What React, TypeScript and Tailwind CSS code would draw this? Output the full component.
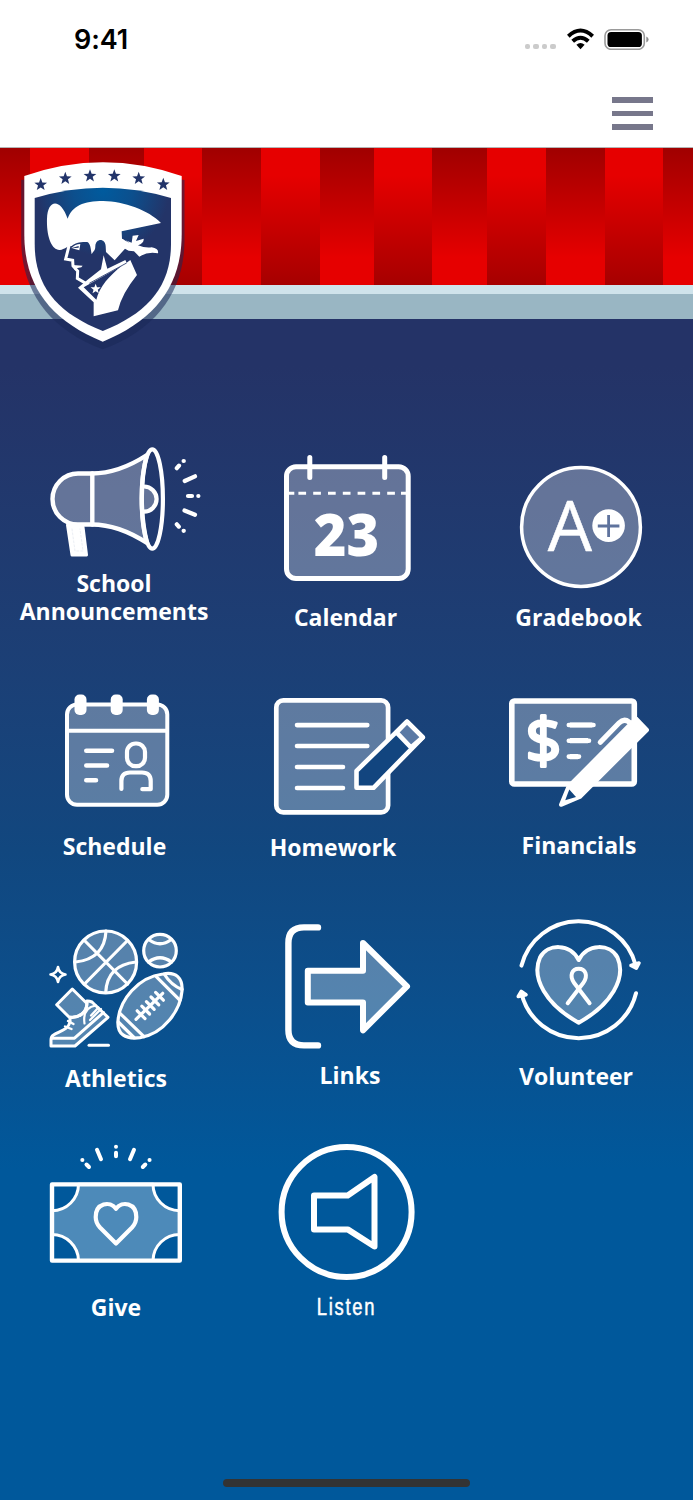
import type { ReactNode } from 'react';
import clsx from 'clsx';

const STRIPES = [
  'w-[30px]',
  'w-[59px]',
  'w-[55px]',
  'w-[58px]',
  'w-[59px]',
  'w-[59px]',
  'w-[54px]',
  'w-[58px]',
  'w-[55px]',
  'w-[59px]',
  'w-[59px]',
  'w-[58px]',
  'w-[30px]',
];

const LOGO_STARS = [
  [40.7, 184.7],
  [65.3, 178.5],
  [90, 176],
  [114.3, 176],
  [138.7, 178.5],
  [163.3, 184.5],
];

function starPoints(cx: number, cy: number, r: number) {
  return Array.from({ length: 10 }, (_, i) => {
    const a = (Math.PI / 5) * i - Math.PI / 2;
    const d = i % 2 ? r * 0.42 : r;
    return `${cx + d * Math.cos(a)},${cy + d * Math.sin(a)}`;
  }).join(' ');
}

function StatusBar() {
  return (
    <div className="flex h-20 items-start justify-between pl-[74px] pr-11">
      <span className="mt-[23px] font-['Inter',sans-serif] text-[27px] leading-[34px] font-semibold tracking-[-0.1px] text-black">
        9:41
      </span>
      <div className="mt-7 flex h-[22px] items-center">
        <div className="mr-[11px] mt-[15px] flex gap-[3px]">
          {[0, 1, 2, 3].map((i) => (
            <span key={i} className="size-[5.6px] rounded-[2px] bg-[#cbcbcb]" />
          ))}
        </div>
        <svg className="mr-2.5 h-[22px] w-[27px]" viewBox="567 28 27 22" fill="none" stroke="#000" strokeWidth="4">
          <path d="M568.3 36.2Q580.5 24.8 592.7 36.2" />
          <path d="M572.7 41.3Q580.5 34.2 588.3 41.3" />
          <path d="M576.4 44.8Q580.5 41.2 584.6 44.8L580.5 49.2Z" fill="#000" stroke="none" />
        </svg>
        <svg className="h-[22px] w-[45px]" viewBox="604 28 45 22">
          <rect x="605" y="29.7" width="39.3" height="19.6" rx="6" fill="none" stroke="#9a9a9a" strokeWidth="1.6" />
          <rect x="607.5" y="32" width="34.4" height="15" rx="3.6" />
          <path d="M646.3 36.5Q648.6 37.5 648.6 39.4Q648.6 41.4 646.3 42.4Z" fill="#8d8d8d" />
        </svg>
      </div>
    </div>
  );
}

function Logo() {
  return (
    <svg className="absolute top-2 left-4 h-[200px] w-[174px]" viewBox="16 156 174 200">
      <defs>
        <radialGradient id="shield" gradientUnits="userSpaceOnUse" cx="103" cy="190" r="66">
          <stop offset="0" stopColor="#005b9e" />
          <stop offset=".45" stopColor="#0c4f8d" />
          <stop offset="1" stopColor="#233468" />
        </radialGradient>
      </defs>
      <path
        d="M21.2 180L103 168L184.5 180V240C184.5 290 158 329 102.7 349.3C48 329 21.2 290 21.2 240Z"
        fill="#1a2858"
        opacity=".55"
      />
      <path d="M24.3 176Q103 148.5 181.7 176V234C181.7 286 155 320 102.7 341.7C50 320 24.3 286 24.3 234Z" fill="#fff" />
      <path d="M34.7 198Q102.8 177.3 171 198V244C171 286 148 313 102.8 331C57 313 34.7 286 34.7 244Z" fill="url(#shield)" />
      {LOGO_STARS.map(([x, y]) => (
        <polygon key={x} points={starPoints(x, y, 6.7)} fill="#22346a" />
      ))}
      {/* Patriot head */}
      <g transform="translate(0 140) scale(.3333)">
        <path
          d="M203 236C182 174 143 176 141 236C139 292 156 332 180 330C194 328 202 318 215 318C228 306 245 306 262 306C272 312 272 326 275 343C280 332 286 334 286 318C288 294 315 294 317 318L318 336L344 361L375 326L386 332L402 334L418 350Q445 333 474 340Q477 325 455 322Q436 325 414 316Q433 308 431 296L408 303L416 285L398 287L395 308L366 296L365 274L483 249C445 210 372 184 310 183C250 183 217 198 203 236Z"
          fill="#fff"
        />
        <path d="M366 291L389 309L374 301Z" fill="#1f3a72" />
        <path
          d="M207 318L197 357L218 361L219 378L233 393L232 415L262 433"
          fill="none"
          stroke="#fff"
          strokeWidth="9"
        />
        <path d="M218 375L248 377L244 382L229 385L236 394L224 390Z" fill="#fff" />
        <path d="M213 325Q226 312 241 312L238 331L216 325L236 323L236 318Z" fill="#fff" />
        <path d="M311 346L303 388L262 420L234 443L281 487L281 529L354 511Q365 462 411 405L391 360L380 368L376 360L322 386Z" fill="#fff" />
        <path d="M251 442L366 377C330 405 298 440 289 479Z" fill="#22346a" />
        <path d="M268 430L380 369" stroke="#22346a" strokeWidth="2.5" />
        <polygon points={starPoints(287, 447, 16)} fill="#fff" />
      </g>
    </svg>
  );
}

function Banner() {
  return (
    <div className="relative">
      <div className="flex h-[137px]">
        {STRIPES.map((width, i) => (
          <div
            key={i}
            className={clsx(
              width,
              'bg-linear-to-b',
              i % 2 ? 'from-[#e60000] from-20% to-[#a60000]' : 'from-[#a00000] to-[#e60000] to-80%',
            )}
          />
        ))}
      </div>
      <div className="h-[9px] bg-[#cfe3eb]" />
      <div className="h-[25px] bg-[#99b6c3]" />
      <Logo />
    </div>
  );
}

interface TileProps {
  label: ReactNode;
  // viewBox of the drawing; its width is always one column
  box: string;
  size: string;
  labelClass?: string;
  children: ReactNode;
}

const boldLabel = "font-['Open_Sans',sans-serif] text-[23px] font-bold";

function Tile({ label, box, size, labelClass, children }: TileProps) {
  return (
    <button className="flex flex-col items-stretch text-white">
      <svg
        className={clsx('w-[231px]', size)}
        viewBox={box}
        fill="none"
        stroke="#fff"
        strokeLinecap="round"
        strokeLinejoin="round"
      >
        {children}
      </svg>
      <span className={clsx('block text-center leading-7', labelClass)}>{label}</span>
    </button>
  );
}

const tint = 'rgba(255,255,255,.3)';

export default function App() {
  return (
    <div className="flex h-[1500px] w-[693px] flex-col overflow-hidden bg-white">
      <header className="h-[148px] shrink-0 border-b border-[#b5b5b5]">
        <StatusBar />
        <button className="mt-[17px] ml-[612px] flex w-[40.5px] flex-col gap-2">
          <span className="h-[5.6px] bg-[#77778b]" />
          <span className="h-[5.6px] bg-[#77778b]" />
          <span className="h-[5.6px] bg-[#77778b]" />
        </button>
      </header>

      <div className="relative z-10">
        <Banner />
      </div>

      <main className="flex flex-1 flex-col bg-linear-to-b from-[#243367] from-4% via-[#11477f] via-45% to-[#00589b] to-72% pt-[111px]">
        <div className="grid grid-cols-3 grid-rows-[250px_225px_225px_225px]">
          <Tile
            label={
              <>
                <span className="block">School</span>
                <span className="block">Announcements</span>
              </>
            }
            box="0 430 231 140"
            size="h-[140px]"
            labelClass={clsx(boldLabel, 'pr-[3px] !leading-[27.5px]')}
          >
            <path
              d="M92 473.5H78A25.5 25.5 0 0 0 78 524.5H92C112 524.5 130 532 147 543C140 515 140 480 147 455C130 466 112 473.5 92 473.5Z"
              fill={tint}
              strokeWidth="4.4"
            />
            <path d="M92.3 473.5V524.5" strokeWidth="4.4" />
            <ellipse cx="152.3" cy="499" rx="10.6" ry="49.7" strokeWidth="4.2" />
            <path d="M144 486.5A12.6 12.6 0 0 1 144 511.7" fill={tint} strokeWidth="4.2" />
            <path d="M67.5 525L83 527L86.5 555L72 555Z" fill="#fff" strokeWidth="3" />
            <path d="M72 529L75 551H83L80 529" stroke="#e2e7ef" strokeWidth=".7" strokeDasharray="2 2" />
            <path
              d="M176.8 468.2L179 465.6M183.6 461H183.8M184.7 481L195 476.3M188 496H192M198.3 496H198.4M184.5 510.5L195 514.8M176.8 524.3L178.8 526.6M183.6 530.8H183.8"
              strokeWidth="4.2"
            />
          </Tile>

          <Tile label="Calendar" box="231 430 231 173" size="h-[173px]" labelClass={clsx(boldLabel, 'pr-0.5')}>
            <rect x="286.5" y="466.8" width="121.7" height="111.7" rx="9.5" fill={tint} strokeWidth="5" />
            <path d="M288 493.2H294.3M298.4 493.2H402M401 493.2H408" strokeWidth="2.9" strokeLinecap="butt" strokeDasharray="7.7 7.1" />
            <path d="M309.8 457.5V477.5M384.7 457.5V477.5" strokeWidth="5" />
            <text
              x="346.5"
              y="555.6"
              textAnchor="middle"
              textLength="65.5"
              lengthAdjust="spacingAndGlyphs"
              fill="#fff"
              stroke="none"
              className="font-['Open_Sans',sans-serif] text-[59px] font-extrabold"
            >
              23
            </text>
          </Tile>

          <Tile label="Gradebook" box="462 430 231 173" size="h-[173px]" labelClass={clsx(boldLabel, 'pl-0.5')}>
            <circle cx="581" cy="527" r="59.4" fill={tint} strokeWidth="3.5" />
            <text
              x="569.8"
              y="551"
              textAnchor="middle"
              fill="#fff"
              strokeWidth=".5"
              className="font-['Open_Sans',sans-serif] text-[70px]"
            >
              A
            </text>
            <circle cx="608.6" cy="525.6" r="16.3" fill="#fff" stroke="none" />
            <path d="M597.8 526H619.4M608.6 515V537" stroke="#5f739d" strokeWidth="2.8" strokeLinecap="butt" />
          </Tile>

          <Tile label="Schedule" box="0 680 231 151.5" size="h-[151.5px]" labelClass={clsx(boldLabel, 'pr-0.5')}>
            <rect x="67" y="704.5" width="100.3" height="100.3" rx="10" fill={tint} strokeWidth="4" />
            <path d="M67 730.7H167" strokeWidth="4" strokeLinecap="butt" />
            {[74.5, 110.7, 146.9].map((x) => (
              <rect key={x} x={x} y="694.5" width="12" height="20.4" rx="5" fill="#fff" stroke="none" />
            ))}
            <path d="M86.3 750.8H112M86.3 765.5H107M86.3 780.2H96" strokeWidth="4.6" />
            <rect x="127" y="743.5" width="18" height="22.7" rx="8.5" strokeWidth="4.2" />
            <path d="M121.4 789V781Q121.4 772.5 130 772.5H142Q150.7 772.5 150.7 781V789.2H142.3" strokeWidth="4.2" />
          </Tile>

          <Tile label="Homework" box="231 680 231 153" size="h-[153px]" labelClass={clsx(boldLabel, 'pr-[27px]')}>
            <rect x="276.3" y="700.4" width="111.8" height="112" rx="7" fill={tint} strokeWidth="4.7" />
            <path d="M297 725.1H367.3M297 746H367.3M297 767H343M297 788H343" strokeWidth="4.6" />
            <path d="M407 721.7L422.8 737.3L373.5 787.8H356.5V770.8Z" fill="#12457f" strokeWidth="4.6" />
            <path d="M407 721.7L422.8 737.3L411 747.5L396.5 732.3Z" fill="#5a79a5" strokeWidth="4.6" />
          </Tile>

          <Tile label="Financials" box="462 680 231 151" size="h-[151px]" labelClass={clsx(boldLabel, 'pl-[3px]')}>
            <rect x="511.8" y="701" width="122.5" height="83" rx="2.5" fill={tint} strokeWidth="5.6" />
            <text
              x="543.4"
              y="763"
              textAnchor="middle"
              fill="#fff"
              strokeWidth="3"
              className="font-['Open_Sans',sans-serif] text-[63px]"
            >
              $
            </text>
            <path d="M570 725H592.3M570 740.7H588M570 756.6H578" strokeWidth="5.2" strokeLinecap="butt" />
            <path d="M568.8 725H593.5M568.8 740.7H589M568.8 756.6H579" strokeWidth="4.6" />
            <path d="M600.3 742.2L619 723Q624 718 629 722" strokeWidth="5.2" />
            <path d="M568.5 786.5L636 718.5L647 730L579.8 797L561 804.8Z" fill="#fff" strokeWidth="4" />
            <path d="M569.3 789.5L576 797L565.2 800.3Z" fill="#12457f" stroke="none" />
            <path d="M604.5 744.5L623.3 726" stroke="#5a79a5" strokeWidth="1.5" />
          </Tile>

          <Tile label="Athletics" box="0 905 231 159" size="h-[159px]" labelClass={clsx(boldLabel, 'pl-px')}>
            <g strokeWidth="3.2">
              <circle cx="105.6" cy="962" r="31" fill={tint} />
              <path d="M84.5 940.5L127.5 984M127.5 940.5L84.5 984M106 931Q104.6 958.9 75.5 962M136 962Q107.1 965 105.7 992.5" />
              <circle cx="160" cy="950.7" r="16.3" fill={tint} />
              <path d="M148.8 939.5Q160 948 171.2 939.5M148.5 962Q160 953.5 171.5 962" />
              <path
                d="M163 974C176 971.5 183 978 182 991C180.5 1010 164 1034 140 1037.7C125 1039.5 117 1034 118 1021C119.5 1000 138 977 163 974Z"
                fill={tint}
              />
              <path d="M156 976.3L180 1000.3M164.5 974.5Q171 985 182 989.5M120 1013.3L144 1036.7M118.3 1022L134 1037.5" />
              <path d="M136 1019.3L162.7 993.3" />
              {[0, 1, 2, 3, 4].map((i) => (
                <path key={i} d={`M${137.2 + i * 4.6} ${1010.8 - i * 4.6}L${145 + i * 4.6} ${1018.6 - i * 4.6}`} />
              ))}
            </g>
            <g strokeWidth="3">
              <path d="M58 967Q59 973.5 65.5 974.5Q59 975.5 58 982Q57 975.5 50.5 974.5Q57 973.5 58 967Z" strokeWidth="2.6" />
              <path d="M72.3 989L56.7 1004.7L69 1017C79 1018.5 87 1012 87 1003.5Z" fill={tint} />
              <path
                d="M70 1017.3V1022C68 1030 60 1031 53.5 1035Q51 1036.5 51 1040V1046H75L108 1017.3L92 1002Q89 1000.7 86.8 1001V1003.5C87 1012 79 1018.5 70 1017.3Z"
                fill={tint}
              />
              <path d="M51.5 1038.2H74.5L103.5 1012.5" />
              <path d="M65 1026.5L71.5 1029M68 1021L73.5 1024" strokeWidth="2.4" />
              <path d="M84.5 1023.5C83 1013 87 1007 96 1005.5M90 1020L101 1009M91 1015.5L98.5 1007.5" strokeWidth="2.2" />
              <path d="M89 1045.2H108.5" />
            </g>
          </Tile>

          <Tile label="Links" box="231 905 231 156" size="h-[156px]" labelClass={clsx(boldLabel, 'pl-[7px]')}>
            <path d="M318 927.4H304Q288.4 927.4 288.4 943V1030Q288.4 1045.4 304 1045.4H318" strokeWidth="6.4" />
            <path d="M307.8 970.7H363V943L407 986.4L363 1030.3V1002.4H307.8Z" fill={tint} strokeWidth="6" />
          </Tile>

          <Tile label="Volunteer" box="462 905 231 157" size="h-[157px]" labelClass={clsx(boldLabel, 'pr-[3px]')}>
            <path d="M521.5 966A59 59 0 0 1 635.6 965.3M636 993.6A59 59 0 0 1 521.4 993.6" strokeWidth="4" transform="translate(0 -.4)" />
            <path d="M631 965.5L636.3 968.2L639 963ZM518.3 996.5L521.3 991.5L526 994.8Z" fill="#fff" strokeWidth="3.6" />
            <path
              d="M578.7 960C570 943 547.5 943.5 540 957.5C531 978 546 1004.5 578.7 1022.7C611.5 1004.5 626.5 978 617.5 957.5C610 943.5 587.5 943 578.7 960Z"
              fill={tint}
              strokeWidth="4"
            />
            <path
              d="M567.7 1003.2L583.2 983C588.5 975.5 585.5 968.8 578.7 968.8C572 968.8 569 975.5 574.2 983L589.6 1003.2"
              strokeWidth="4"
            />
          </Tile>

          <Tile label="Give" box="0 1130 231 163" size="h-[163px]" labelClass={clsx(boldLabel, 'pl-px')}>
            <path
              d="M78.5 1184.3H153A26.5 26.5 0 0 0 179.7 1210.7V1234.5A26.5 26.5 0 0 0 153 1260.5H78.5A26.5 26.5 0 0 0 52 1234.5V1210.7A26.5 26.5 0 0 0 78.5 1184.3Z"
              fill={tint}
              strokeWidth="3"
            />
            <rect x="52" y="1184.4" width="127.8" height="76.2" strokeWidth="4.4" />
            <path
              d="M116 1208.7C110 1200.5 95.7 1203 95.7 1217C95.7 1221.5 97 1224.3 100 1227.5L116 1243.5L132 1227.5C135 1224.3 136.3 1221.5 136.3 1217C136.3 1203 122 1200.5 116 1208.7Z"
              strokeWidth="4.2"
            />
            <path
              d="M82.3 1160H82.4M86.5 1164.5L89 1167M97 1149.8L101 1159.2M116 1146.7V1146.8M116 1152.7V1156.2M134 1149.8L130 1159.2M149.5 1160H149.6M145.3 1164.5L142.8 1167"
              strokeWidth="4"
            />
          </Tile>

          <Tile
            label="Listen"
            box="231 1130 231 163"
            size="h-[163px]"
            labelClass="scale-x-[.8] font-['Liberation_Sans',sans-serif] text-[23px] tracking-[2.2px] [-webkit-text-stroke:0.5px_white]"
          >
            <circle cx="346.6" cy="1212" r="65" strokeWidth="6" />
            <path d="M314 1195.5H347.7L374.5 1177V1246.5L347.7 1229.4H314Z" strokeWidth="6" />
          </Tile>
        </div>
        <div className="mx-auto mt-auto mb-[13px] h-2 w-[247px] rounded-full bg-[#333]" />
      </main>
    </div>
  );
}
